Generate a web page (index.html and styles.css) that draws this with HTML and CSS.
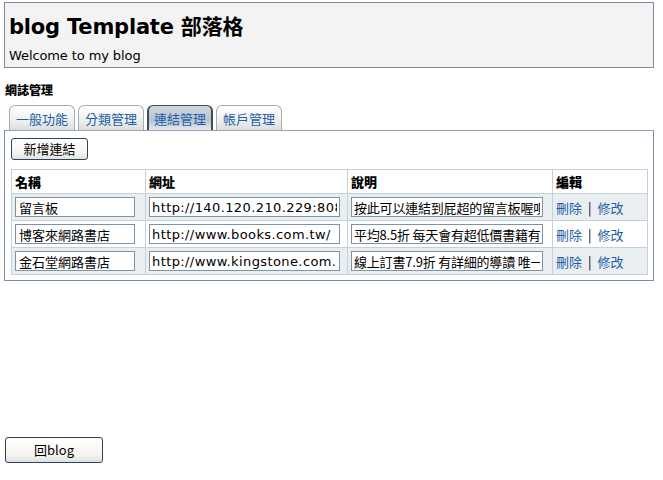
FILE: index.html
```html
<!DOCTYPE html>
<html lang="zh-Hant">
<head>
    <meta charset="UTF-8">
    <meta name="viewport" content="width=device-width, initial-scale=1.0">
    <title>blog Template 部落格 - 網誌管理</title>
    <link rel="stylesheet" href="styles.css">
</head>
<body>
    <!-- 標頭 -->
    <div class="header">
        <h1>blog Template 部落格</h1>
        <div class="welcome">Welcome to my blog</div>
    </div>

    <h3 class="section-title">網誌管理</h3>

    <!-- 分頁 -->
    <ul class="tabs">
        <li><a href="#">一般功能</a></li>
        <li><a href="#">分類管理</a></li>
        <li class="active"><a href="#">連結管理</a></li>
        <li><a href="#">帳戶管理</a></li>
    </ul>

    <div class="panel">
        <button class="btn btn-add" type="button">新增連結</button>
        <table class="links">
            <thead>
                <tr>
                    <th class="col-name">名稱</th>
                    <th class="col-url">網址</th>
                    <th class="col-desc">說明</th>
                    <th class="col-edit">編輯</th>
                </tr>
            </thead>
            <tbody>
                <tr class="odd">
                    <td><input type="text" class="in-name" value="留言板"></td>
                    <td><input type="text" class="in-url" value="http://140.120.210.229:8080/"></td>
                    <td><input type="text" class="in-desc" value="按此可以連結到屁超的留言板喔唄"></td>
                    <td class="edit"><a href="#">刪除</a><span class="sep">|</span><a href="#">修改</a></td>
                </tr>
                <tr>
                    <td><input type="text" class="in-name" value="博客來網路書店"></td>
                    <td><input type="text" class="in-url" value="http://www.books.com.tw/"></td>
                    <td><input type="text" class="in-desc" value="平均8.5折 每天會有超低價書籍有"></td>
                    <td class="edit"><a href="#">刪除</a><span class="sep">|</span><a href="#">修改</a></td>
                </tr>
                <tr class="odd">
                    <td><input type="text" class="in-name" value="金石堂網路書店"></td>
                    <td><input type="text" class="in-url" value="http://www.kingstone.com.tw/"></td>
                    <td><input type="text" class="in-desc" value="線上訂書7.9折 有詳細的導讀 唯一"></td>
                    <td class="edit"><a href="#">刪除</a><span class="sep">|</span><a href="#">修改</a></td>
                </tr>
            </tbody>
        </table>
    </div>

    <button class="btn btn-back" type="button">回blog</button>
</body>
</html>
```

FILE: styles.css
```css
body {
    margin: 0;
    padding: 2px 10px 0 4px;
    font-family: "DejaVu Sans", Verdana, "Noto Sans CJK TC", sans-serif;
    font-size: 12px;
    color: #000;
    background: #fff;
}
.header {
    width: 644px;
    height: 54px;
    padding: 10px 0 0 4px;
    background-color: #f3f3f3;
    border: 1px solid #7d8ba3;
}
.header h1 {
    margin: 0;
    font-size: 21px;
    font-weight: bold;
    line-height: 28px;
    letter-spacing: -0.2px;
}
.welcome {
    margin-top: 7px;
    font-size: 13px;
    line-height: 16px;
    letter-spacing: -0.1px;
}
.section-title {
    margin: 14px 0 0 1px;
    font-size: 12px;
    font-weight: 900;
    line-height: 16px;
    font-family: "Noto Sans CJK TC", sans-serif;
}
.tabs {
    display: flex;
    gap: 3px;
    list-style: none;
    margin: 6px 0 0 5px;
    padding: 0;
    height: 26px;
}
.tabs li {
    display: flex;
    align-items: center;
    height: 25px;
    padding: 0 6px;
    box-sizing: border-box;
    margin-top: 1px;
    border: 1px solid #a6adb4;
    border-bottom: none;
    border-radius: 6px 6px 0 0;
    background: linear-gradient(#ffffff, #eef0ef 60%, #dcdedd);
}
.tabs li.active {
    border-color: #3f4c5a;
    border-width: 1px 2px 0 2px;
    padding: 0 5px;
    background: linear-gradient(#ced7df, #b7c4cf 60%, #e6eaee);
}
.tabs a {
    color: #1f5ea6;
    text-decoration: none;
    font-family: "Noto Sans CJK TC", sans-serif;
    font-size: 13px;
}
.panel {
    width: 636px;
    padding: 7px 6px 5px 6px;
    border: 1px solid #7d8ba3;
    border-top-color: #98a2b0;
}
.btn {
    font-family: "Noto Sans CJK TC", sans-serif;
    font-size: 13px;
    color: #000;
    border: 1px solid #2f4456;
    border-radius: 3px;
    background: linear-gradient(#ffffff, #f6f4ee 70%, #dfe3e4);
    padding: 0;
    cursor: pointer;
}
.btn-add {
    width: 77px;
    height: 22px;
    line-height: 18px;
}
table.links {
    margin-top: 9px;
    width: 637px;
    border-collapse: collapse;
    border: 1px solid #c5d0d8;
}
.links th {
    text-align: left;
    font-size: 13px;
    font-family: "Noto Sans CJK TC", sans-serif;
    font-weight: 900;
    height: 23px;
    padding: 0 3px;
    border: 1px solid #c5d0d8;
    background: #fff;
}
.links td {
    height: 26px;
    padding: 0 3px;
    border: 1px solid #c5d0d8;
}
.links tr.odd td {
    background: #e9eff1;
}
.col-name { width: 127px; }
.col-url { width: 195px; }
.col-desc { width: 198px; }
.links input {
    box-sizing: border-box;
    height: 20px;
    padding: 0 2px;
    border: 1px solid #7d93a6;
    background: #fff;
    color: #000;
    font-family: "DejaVu Sans", "Noto Sans CJK TC", sans-serif;
    font-size: 13px;
    letter-spacing: 0.4px;
}
.links input.in-name {
    width: 120px;
    padding: 0 3px;
    font-family: "Noto Sans CJK TC", sans-serif;
    letter-spacing: 0;
}
.in-url { width: 191px; }
.links input.in-desc {
    width: 192px;
    font-family: "Noto Sans CJK TC", sans-serif;
    letter-spacing: -0.2px;
}
.edit {
    font-family: "Noto Sans CJK TC", sans-serif;
    font-size: 13px;
}
.edit a {
    color: #1f5ea6;
    text-decoration: none;
}
.sep {
    margin: 0 6px;
}
.btn-back {
    display: block;
    margin-top: 156px;
    margin-left: 1px;
    width: 98px;
    height: 26px;
    line-height: 22px;
}
```
